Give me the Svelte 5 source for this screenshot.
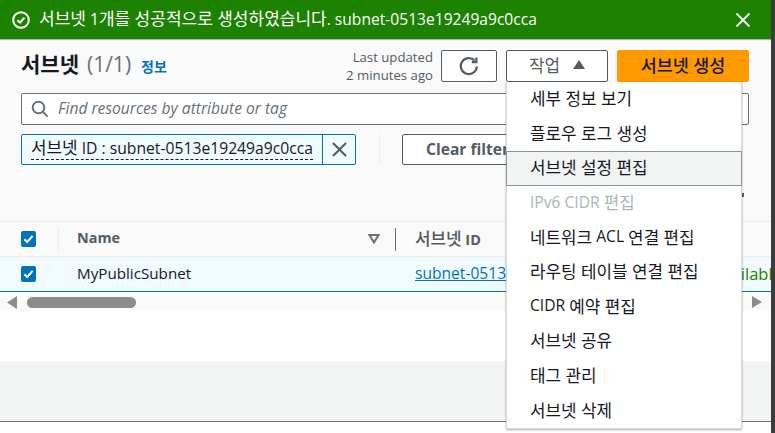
<script>
    const menuItems = [
        { label: '세부 정보 보기' },
        { label: '플로우 로그 생성' },
        { label: '서브넷 설정 편집', active: true },
        { label: 'IPv6 CIDR 편집', disabled: true },
        { label: '네트워크 ACL 연결 편집' },
        { label: '라우팅 테이블 연결 편집' },
        { label: 'CIDR 예약 편집' },
        { label: '서브넷 공유' },
        { label: '태그 관리' },
        { label: '서브넷 삭제' }
    ];

    // hangul is set a bit larger than latin in the source page
    function runs(text) {
        return text.split(/([\uAC00-\uD7A3]+(?: [\uAC00-\uD7A3]+)*)/).filter(Boolean).map((part) => ({
            part,
            ko: /[\uAC00-\uD7A3]/.test(part)
        }));
    }
</script>

{#snippet txt(text)}{#each runs(text) as r}<span class:ko={r.ko}>{r.part}</span>{/each}{/snippet}

<div class="page">
    <div class="flash">
        <svg width="18" height="18" viewBox="0 0 18 18" fill="none" stroke="#fff" stroke-width="2">
            <circle cx="9" cy="9" r="7.8" />
            <path d="M5.4 9.2 8 11.6 12.4 6.8" />
        </svg>
        <span class="flash-text">{@render txt('서브넷 ')}1{@render txt('개를 성공적으로 생성하였습니다.')} subnet-0513e19249a9c0cca</span>
        <svg class="flash-close" width="16" height="16" viewBox="0 0 16 16" stroke="#eaeded" stroke-width="2">
            <path d="M1.5 1.5 14.5 14.5M14.5 1.5 1.5 14.5" />
        </svg>
    </div>

    <div class="panel">
        <div class="header">
            <div class="title">
                <h1>서브넷</h1>
                <span class="count">(1/1)</span>
                <a class="info" href="#info">정보</a>
            </div>
            <div class="updated">Last updated<br />2 minutes ago</div>
            <button class="btn refresh" aria-label="새로 고침">
                <svg width="20" height="20" viewBox="0 0 20 20" fill="none" stroke="#545b64" stroke-width="2.2">
                    <path d="M15.6 4.6A8 8 0 1 0 17.8 10.5" />
                    <path d="M17.4 1.6V6.2H12.8" />
                </svg>
            </button>
            <div class="actions">
                <button class="btn actions-btn">
                    <span class="ko">작업</span>
                    <svg width="12" height="9" viewBox="0 0 12 9"><path d="M6 0 12 9H0Z" fill="#545b64" /></svg>
                </button>
                <ul class="menu">
                    {#each menuItems as item}
                        <li class:active={item.active} class:disabled={item.disabled}>{@render txt(item.label)}</li>
                    {/each}
                </ul>
                <span class="speck"></span>
            </div>
            <button class="btn primary"><span class="ko">서브넷 생성</span></button>
        </div>

        <div class="search">
            <svg width="18" height="18" viewBox="0 0 18 18" fill="none" stroke="#687078" stroke-width="2">
                <circle cx="7.5" cy="7.5" r="5.8" />
                <path d="M11.8 11.8 16.6 16.6" />
            </svg>
            <span class="search-text">Find resources by attribute or tag</span>
        </div>

        <div class="filters">
            <div class="token">
                <span class="token-label"><span class="dashed">{@render txt('서브넷')} ID : subnet-0513e19249a9c0cca</span></span>
                <span class="token-remove">
                    <svg width="15" height="15" viewBox="0 0 15 15" stroke="#545b64" stroke-width="2">
                        <path d="M1 1 14 14M14 1 1 14" />
                    </svg>
                </span>
            </div>
            <span class="filter-sep"></span>
            <button class="btn clear">Clear filters</button>
        </div>

        <div class="table-wrap">
            <div class="row head">
                <span class="cell-check">
                    <svg width="15" height="16" viewBox="0 0 15 16">
                        <rect width="15" height="16" rx="2" fill="#0073bb" />
                        <path d="M3.4 8.2 6.2 11 11.6 4.8" fill="none" stroke="#fff" stroke-width="2" />
                    </svg>
                </span>
                <span class="sep light"></span>
                <span class="cell-name">Name</span>
                <svg width="12" height="10" viewBox="0 0 12 10">
                    <path d="M1.5 1H10.5L6 8.5Z" fill="none" stroke="#687078" stroke-width="2" />
                </svg>
                <span class="sep dark"></span>
                <span class="cell-id">{@render txt('서브넷')} ID</span>
            </div>
            <div class="row selected">
                <span class="cell-check">
                    <svg width="15" height="16" viewBox="0 0 15 16">
                        <rect width="15" height="16" rx="2" fill="#0073bb" />
                        <path d="M3.4 8.2 6.2 11 11.6 4.8" fill="none" stroke="#fff" stroke-width="2" />
                    </svg>
                </span>
                <span class="cell-value">MyPublicSubnet</span>
                <a class="cell-link" href="#subnet">subnet-0513e19249a9c0cca</a>
                <span class="status">Available</span>
            </div>
            <div class="scrollbar">
                <svg width="10" height="13" viewBox="0 0 10 13"><path d="M10 0V13L0 6.5Z" fill="#8c8c8c" /></svg>
                <span class="thumb"></span>
                <svg class="right" width="10" height="12" viewBox="0 0 10 12"><path d="M0 0V12L10 6Z" fill="#8c8c8c" /></svg>
            </div>
        </div>
    </div>

    <div class="gap"></div>
    <div class="footer-band"></div>
    <div class="edge"></div>
</div>

<style>
:global(body) {
    margin: 0;
    background: #fff;
}

.page {
    position: relative;
    width: 775px;
    height: 433px;
    overflow: hidden;
    display: flex;
    flex-direction: column;
    font-family: "Open Sans", "Noto Sans CJK KR", sans-serif;
    font-size: 15.6px;
    color: #16191f;
}

.ko {
    font-size: 16.9px;
}

.flash {
    box-sizing: border-box;
    height: 40px;
    flex: none;
    display: flex;
    align-items: center;
    padding: 0 24px 0 12px;
    background: #1d8102;
    border-bottom: 1px solid #aab7b8;
    color: #fff;
}

.flash-text {
    margin-left: 9px;
    flex: 1;
    white-space: nowrap;
    position: relative;
    top: -2px;
}

.flash-text .ko {
    font-size: 17px;
}

.panel {
    flex: none;
    height: 271px;
    background: #fafafa;
}

.header {
    height: 32px;
    display: flex;
    align-items: center;
    padding: 10px 26px 0 21px;
}

.title {
    flex: 1;
    display: flex;
    align-items: baseline;
    position: relative;
    top: -3px;
}

h1 {
    margin: 0;
    font-size: 21px;
    font-weight: 700;
}

.count {
    margin-left: 8px;
    font-size: 21px;
    color: #687078;
}

.info {
    margin-left: 10px;
    font-size: 14px;
    font-weight: 700;
    color: #0073bb;
    text-decoration: none;
}

.updated {
    font-size: 13.2px;
    line-height: 18px;
    color: #545b64;
    text-align: right;
    margin-right: 8px;
}

.btn {
    box-sizing: border-box;
    height: 32px;
    font-family: inherit;
    font-size: 15.6px;
    background: #fff;
    border: 1px solid #545b64;
    border-radius: 2px;
    color: #545b64;
    padding: 0;
}

.refresh {
    width: 56px;
    display: flex;
    align-items: center;
    justify-content: center;
}

.actions {
    position: relative;
    margin-left: 9px;
}

.actions-btn {
    width: 102px;
    display: flex;
    align-items: center;
    justify-content: center;
    gap: 13px;
    padding-bottom: 3px;
}

.menu {
    position: absolute;
    z-index: 2;
    top: 32px;
    left: 0;
    box-sizing: border-box;
    width: 236px;
    height: 347px;
    margin: 0;
    padding: 0;
    list-style: none;
    background: #fff;
    border: 1px solid #d5dbdb;
    border-top: none;
    box-shadow: 0 1px 2px rgba(0, 28, 36, 0.35);
}

.menu li {
    box-sizing: border-box;
    height: 34.6px;
    display: flex;
    align-items: center;
    white-space: pre;
    padding: 0 23px 3px;
    color: #16191f;
}

.menu li.active {
    background: #f2f3f3;
    border: 1px solid #879596;
    margin: 0 -1px;
}

.menu li.disabled {
    color: #aab7b8;
}

.speck {
    position: absolute;
    left: 236px;
    top: 143px;
    width: 2px;
    height: 4px;
    background: #545b64;
}

.primary {
    width: 132px;
    margin-left: 9px;
    padding-bottom: 3px;
    background: #ff9900;
    border-color: #ff9900;
    color: #16191f;
    font-weight: 500;
}

.primary .ko {
    font-size: 17.4px;
}

.search {
    box-sizing: border-box;
    height: 32px;
    margin: 11px 26px 0 21px;
    display: flex;
    align-items: center;
    gap: 9px;
    padding: 0 9px;
    background: #fff;
    border: 1px solid #687078;
    border-radius: 2px;
    color: #687078;
    font-style: italic;
}

.search-text {
    position: relative;
    top: -1px;
}

.filters {
    height: 31px;
    margin: 9px 0 0 21px;
    display: flex;
    align-items: center;
}

.token {
    box-sizing: border-box;
    height: 31px;
    display: flex;
    background: #f1faff;
    border: 1px solid #0073bb;
    border-radius: 2px;
}

.token-label {
    width: 300px;
    padding-left: 9px;
    box-sizing: border-box;
    font-size: 15.7px;
    line-height: 25px;
    white-space: nowrap;
}

.dashed {
    border-bottom: 1px dashed #16191f;
}

.token-remove {
    width: 32px;
    display: flex;
    align-items: center;
    justify-content: center;
    border-left: 1px solid #0073bb;
}

.filter-sep {
    width: 1px;
    height: 31px;
    margin-left: 23px;
    background: #eaeded;
}

.clear {
    margin-left: 22px;
    width: 130px;
    height: 31px;
    font-weight: 700;
    text-align: left;
    padding: 0 0 2px 23px;
    white-space: nowrap;
    overflow: hidden;
}

.table-wrap {
    margin-top: 56px;
}

.row {
    box-sizing: border-box;
    display: flex;
    align-items: center;
    white-space: nowrap;
    overflow: hidden;
}

.head {
    height: 36px;
    border-top: 1px solid #eaeded;
    border-bottom: 1px solid #eaeded;
    color: #545b64;
    font-size: 14.4px;
    font-weight: 700;
}

.head .ko {
    font-weight: 500;
}

.selected {
    height: 35px;
    background: #f1faff;
    border-bottom: 1px solid #0073bb;
}

.cell-check {
    width: 15px;
    margin-left: 21px;
    display: flex;
    flex: none;
}

.sep {
    width: 1px;
    height: 23px;
    flex: none;
}

.sep.light {
    margin-left: 22px;
    background: #eaeded;
}

.sep.dark {
    margin-left: 15px;
    background: #687078;
}

.cell-name {
    margin-left: 18px;
    width: 291px;
    flex: none;
    position: relative;
    top: -2px;
}

.cell-value {
    margin-left: 41px;
    width: 338px;
    flex: none;
    font-size: 15.2px;
    position: relative;
    top: -1px;
}

.cell-id {
    margin-left: 19px;
    position: relative;
    top: -2px;
}

.cell-link {
    color: #0073bb;
    width: 298px;
    flex: none;
    position: relative;
    top: -1px;
}

.status {
    color: #1d8102;
    font-size: 16.5px;
    position: relative;
    top: -1px;
}

.scrollbar {
    position: relative;
    height: 20px;
    display: flex;
    align-items: center;
    padding-left: 7px;
}

.thumb {
    width: 109px;
    height: 11px;
    margin-left: 10px;
    border-radius: 6px;
    background: #8c8c8c;
}

.right {
    position: absolute;
    left: 752px;
}

.gap {
    height: 50px;
    flex: none;
}

.footer-band {
    height: 60px;
    flex: none;
    background: #f2f3f3;
    border-bottom: 1px solid #687078;
}

.edge {
    position: absolute;
    top: 0;
    right: 0;
    width: 4px;
    height: 433px;
    background: #3c3c3c;
}
</style>
